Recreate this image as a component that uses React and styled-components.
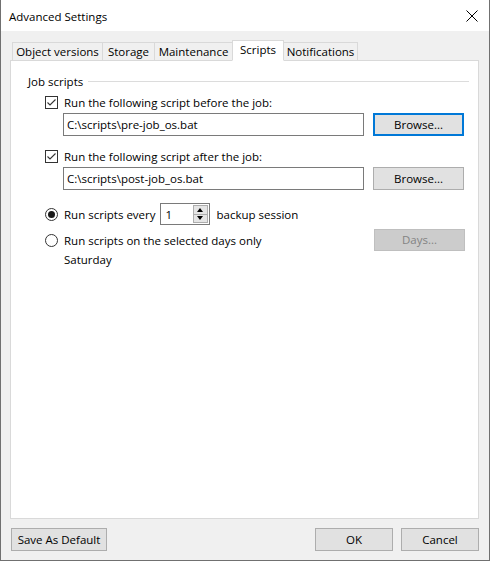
import React, { useState } from "react";
import styled, { createGlobalStyle, css } from "styled-components";

const FONT = `"Open Sans", "Liberation Sans", Arial, sans-serif`;

const GlobalStyle = createGlobalStyle`
  html, body {
    margin: 0;
    padding: 0;
    background: #ffffff;
  }
  body {
    font-family: ${FONT};
    font-size: 11.5px;
    color: #000000;
  }
  * {
    box-sizing: border-box;
  }
`;

const tabs = [
  { label: "Object versions", width: 91 },
  { label: "Storage", width: 53 },
  { label: "Maintenance", width: 79 },
  { label: "Scripts", width: 52 },
  { label: "Notifications", width: 75 },
];

export default function App() {
  const [activeTab, setActiveTab] = useState("Scripts");
  const [before, setBefore] = useState(true);
  const [after, setAfter] = useState(true);
  const [mode, setMode] = useState("every");

  return (
    <>
      <GlobalStyle />
      <Window>
        <TitleBar>
          <Title>Advanced Settings</Title>
          <CloseButton aria-label="Close">
            <svg width="12" height="12" viewBox="0 0 12 12">
              <path d="M0.5 0.5 L11.5 11.5 M11.5 0.5 L0.5 11.5" stroke="#000" strokeWidth="1" />
            </svg>
          </CloseButton>
        </TitleBar>
        <Body>
          <TabRow>
            {tabs.map((tab) => (
              <Tab
                key={tab.label}
                $width={tab.width}
                $active={tab.label === activeTab}
                onClick={() => setActiveTab(tab.label)}
              >
                {tab.label}
              </Tab>
            ))}
          </TabRow>
          <Panel>
            <GroupHeader>
              <span>Job scripts</span>
              <GroupLine />
            </GroupHeader>
            <GroupContent>
              <OptionRow>
                <CheckBox $checked={before} onClick={() => setBefore(!before)}>
                  {before && <CheckMark />}
                </CheckBox>
                <span>Run the following script before the job:</span>
              </OptionRow>
              <InputRow>
                <TextBox defaultValue="C:\scripts\pre-job_os.bat" />
                <Button $focused>Browse...</Button>
              </InputRow>

              <OptionRow $top={12}>
                <CheckBox $checked={after} onClick={() => setAfter(!after)}>
                  {after && <CheckMark />}
                </CheckBox>
                <span>Run the following script after the job:</span>
              </OptionRow>
              <InputRow>
                <TextBox defaultValue="C:\scripts\post-job_os.bat" />
                <Button>Browse...</Button>
              </InputRow>

              <RadioRow $top={13}>
                <Radio $checked={mode === "every"} onClick={() => setMode("every")} />
                <span>Run scripts every</span>
                <Spinner>
                  <SpinValue>1</SpinValue>
                  <SpinButtons>
                    <SpinButton>
                      <Arrow $dir="up" />
                    </SpinButton>
                    <SpinButton>
                      <Arrow $dir="down" />
                    </SpinButton>
                  </SpinButtons>
                </Spinner>
                <span>backup session</span>
              </RadioRow>

              <RadioRow $top={4}>
                <Radio $checked={mode === "days"} onClick={() => setMode("days")} />
                <span>Run scripts on the selected days only</span>
                <Spacer />
                <Button disabled>Days...</Button>
              </RadioRow>
              <DaysText>Saturday</DaysText>
            </GroupContent>
          </Panel>
          <Footer>
            <Button $width={96}>Save As Default</Button>
            <Spacer />
            <Button $width={78}>OK</Button>
            <Button $width={78}>Cancel</Button>
          </Footer>
        </Body>
      </Window>
    </>
  );
}

function CheckMark() {
  return (
    <svg width="11" height="11" viewBox="0 0 11 11">
      <path d="M1.5 5.5 L4 8 L9.5 2.5" stroke="#333" strokeWidth="1.1" fill="none" />
    </svg>
  );
}

const Window = styled.div`
  width: 490px;
  height: 561px;
  display: flex;
  flex-direction: column;
  border: 1px solid #707070;
  border-top: none;
  background: #f0f0f0;
`;

const TitleBar = styled.div`
  height: 31px;
  flex: none;
  display: flex;
  align-items: center;
  justify-content: space-between;
  background: #ffffff;
  padding: 1px 10px 0 8px;
`;

const Title = styled.span`
  font-size: 11.5px;
  color: #000;
`;

const CloseButton = styled.div`
  width: 14px;
  height: 14px;
  display: flex;
  align-items: center;
  justify-content: center;
`;

const Body = styled.div`
  flex: 1;
  display: flex;
  flex-direction: column;
  padding: 9px 10px 0 9px;
`;

const TabRow = styled.div`
  display: flex;
  align-items: flex-end;
  height: 21px;
  margin: 0 0 -1px 2px;
  position: relative;
  z-index: 1;
`;

const Tab = styled.div`
  width: ${({ $width }) => $width}px;
  height: 19px;
  display: flex;
  align-items: center;
  justify-content: center;
  border: 1px solid #d9d9d9;
  background: #f0f0f0;
  padding-bottom: 1px;
  cursor: default;
  white-space: nowrap;

  & + & {
    margin-left: -1px;
  }

  ${({ $active }) =>
    $active &&
    css`
      height: 21px;
      background: #ffffff;
      border-bottom-color: #ffffff;
      padding-bottom: 3px;
      position: relative;
      z-index: 2;
    `}
`;

const Panel = styled.div`
  height: 459px;
  flex: none;
  background: #ffffff;
  border: 1px solid #d9d9d9;
  padding: 13px 9px 0 17px;
`;

const GroupHeader = styled.div`
  display: flex;
  align-items: center;
  height: 14px;
`;

const GroupLine = styled.div`
  flex: 1;
  height: 1px;
  margin-left: 5px;
  background: #dcdcdc;
`;

const GroupContent = styled.div`
  display: flex;
  flex-direction: column;
  padding: 0 4px 0 17px;
`;

const OptionRow = styled.div`
  display: flex;
  align-items: center;
  height: 16px;
  margin-top: ${({ $top }) => $top ?? 6}px;
`;

const CheckBox = styled.div`
  width: 13px;
  height: 13px;
  flex: none;
  border: 1px solid #333333;
  background: #ffffff;
  margin-right: 6px;
  display: flex;
  align-items: center;
  justify-content: center;
`;

const InputRow = styled.div`
  display: flex;
  align-items: center;
  gap: 9px;
  margin: 3px 0 0 18px;
`;

const TextBox = styled.input`
  width: 301px;
  height: 23px;
  border: 1px solid #7a7a7a;
  padding: 0 3px;
  font-family: ${FONT};
  font-size: 11.5px;
  color: #000;
  outline: none;
`;

const Button = styled.button`
  width: ${({ $width }) => $width ?? 91}px;
  height: 23px;
  flex: none;
  background: #e1e1e1;
  border: 1px solid #adadad;
  font-family: ${FONT};
  font-size: 11.5px;
  color: #000;
  padding: 0 0 1px;

  ${({ $focused }) =>
    $focused &&
    css`
      border: 2px solid #0078d7;
    `}

  &:disabled {
    background: #cccccc;
    border-color: #bfbfbf;
    color: #838383;
    height: 22px;
  }
`;

const RadioRow = styled.div`
  display: flex;
  align-items: center;
  height: 22px;
  margin-top: ${({ $top }) => $top}px;
`;

const Radio = styled.div`
  width: 13px;
  height: 13px;
  flex: none;
  border-radius: 50%;
  border: 1px solid #333333;
  background: #ffffff;
  margin-right: 6px;
  display: flex;
  align-items: center;
  justify-content: center;

  &::after {
    content: "";
    width: 7px;
    height: 7px;
    border-radius: 50%;
    background: ${({ $checked }) => ($checked ? "#1a1a1a" : "transparent")};
  }
`;

const Spinner = styled.div`
  width: 50px;
  height: 22px;
  margin: 0 7px 0 4px;
  border: 1px solid #7a7a7a;
  display: flex;
  align-items: center;
  justify-content: space-between;
  padding: 1px;
`;

const SpinValue = styled.span`
  padding-left: 4px;
`;

const SpinButtons = styled.div`
  display: flex;
  flex-direction: column;
  height: 18px;
  width: 15px;
`;

const SpinButton = styled.div`
  flex: 1;
  background: #e5e5e5;
  border: 1px solid #adadad;
  display: flex;
  align-items: center;
  justify-content: center;

  & + & {
    margin-top: -1px;
  }
`;

const Arrow = styled.div`
  width: 0;
  height: 0;
  border-left: 3.5px solid transparent;
  border-right: 3.5px solid transparent;
  ${({ $dir }) =>
    $dir === "up"
      ? css`
          border-bottom: 4px solid #000;
        `
      : css`
          border-top: 4px solid #000;
        `}
`;

const Spacer = styled.div`
  flex: 1;
`;

const DaysText = styled.div`
  height: 16px;
  line-height: 16px;
  margin: 1px 0 0 19px;
`;

const Footer = styled.div`
  display: flex;
  align-items: center;
  gap: 8px;
  padding: 9px 0 0 1px;
`;
